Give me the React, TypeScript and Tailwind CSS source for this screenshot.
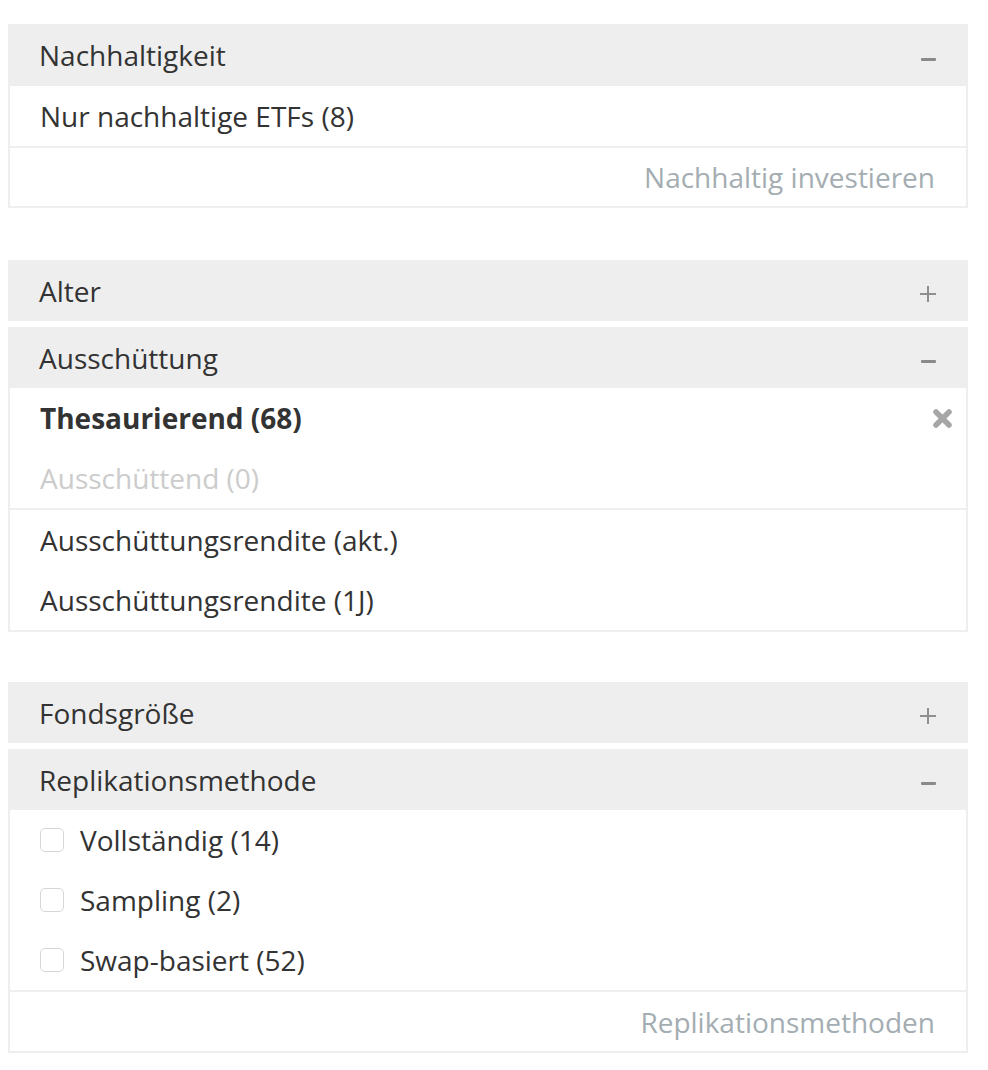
import type { ReactNode } from 'react';

function MinusIcon() {
  return <span className="mt-[8px] block h-[3px] w-[15px] rounded-[1px] bg-[#8a8a8a]" />;
}

function PlusIcon() {
  return (
    <span className="relative mt-[6px] block h-[16px] w-[16px]">
      <span className="absolute left-0 top-[7px] h-[2px] w-[16px] bg-[#8f8f8f]" />
      <span className="absolute left-[7px] top-0 h-[16px] w-[2px] bg-[#8f8f8f]" />
    </span>
  );
}

function CloseIcon() {
  return (
    <svg width="21" height="21" viewBox="0 0 21 21" className="block">
      <path d="M4 4 L17 17 M17 4 L4 17" stroke="#a6a6a6" strokeWidth="5.5" strokeLinecap="round" />
    </svg>
  );
}

function Header({ title, open }: { title: string; open: boolean }) {
  return (
    <div className="flex h-[61px] items-center justify-between bg-[#eeeeee] pl-[31px] pr-[32px]">
      <span className="text-[28px] text-[#333]">{title}</span>
      {open ? <MinusIcon /> : <PlusIcon />}
    </div>
  );
}

function Body({ children }: { children: ReactNode }) {
  return <div className="border-2 border-t-0 border-[#eeeeee] bg-white">{children}</div>;
}

function Row({ children, className = '' }: { children: ReactNode; className?: string }) {
  return <div className={`flex h-[60px] items-center pl-[30px] pr-[13px] text-[28px] ${className}`}>{children}</div>;
}

function FooterLink({ label }: { label: string }) {
  return (
    <div className="flex h-[60px] items-center justify-end border-t-2 border-[#eeeeee] pr-[31px] text-[28px] text-[#a4adb2]">
      {label}
    </div>
  );
}

function CheckRow({ label }: { label: string }) {
  return (
    <Row className="text-[#333]">
      <span className="mr-[16px] block h-[24px] w-[24px] rounded-[5px] border-[1.5px] border-[#d6d6d6] bg-white" />
      {label}
    </Row>
  );
}

export default function App() {
  return (
    <div
      className="w-[988px] bg-white pt-[24px] pl-[8px] pb-[20px]"
      style={{ fontFamily: '"Open Sans", "Noto Sans", sans-serif' }}
    >
      <div className="flex w-[960px] flex-col">
        <div className="flex h-[62px] items-center justify-between bg-[#eeeeee] pl-[31px] pr-[32px]">
          <span className="text-[28px] text-[#333]">Nachhaltigkeit</span>
          <MinusIcon />
        </div>
        <Body>
          <Row className="text-[#333]">Nur nachhaltige ETFs (8)</Row>
          <FooterLink label="Nachhaltig investieren" />
        </Body>
      </div>

      <div className="mt-[52px] flex w-[960px] flex-col gap-[6px]">
        <Header title="Alter" open={false} />
        <div>
          <Header title="Ausschüttung" open />
          <Body>
            <Row className="justify-between font-bold text-[#333]">
              <span>Thesaurierend (68)</span>
              <CloseIcon />
            </Row>
            <Row className="text-[#cccccc]">Ausschüttend (0)</Row>
            <div className="border-t-2 border-[#eeeeee]">
              <Row className="text-[#333]">Ausschüttungsrendite (akt.)</Row>
              <Row className="text-[#333]">Ausschüttungsrendite (1J)</Row>
            </div>
          </Body>
        </div>
      </div>

      <div className="mt-[50px] flex w-[960px] flex-col gap-[6px]">
        <Header title="Fondsgröße" open={false} />
        <div>
          <Header title="Replikationsmethode" open />
          <Body>
            <CheckRow label="Vollständig (14)" />
            <CheckRow label="Sampling (2)" />
            <CheckRow label="Swap-basiert (52)" />
            <div className="flex h-[61px] items-center justify-end border-t-2 border-[#eeeeee] pr-[31px] text-[28px] text-[#a4adb2]">
              Replikationsmethoden
            </div>
          </Body>
        </div>
      </div>
    </div>
  );
}
